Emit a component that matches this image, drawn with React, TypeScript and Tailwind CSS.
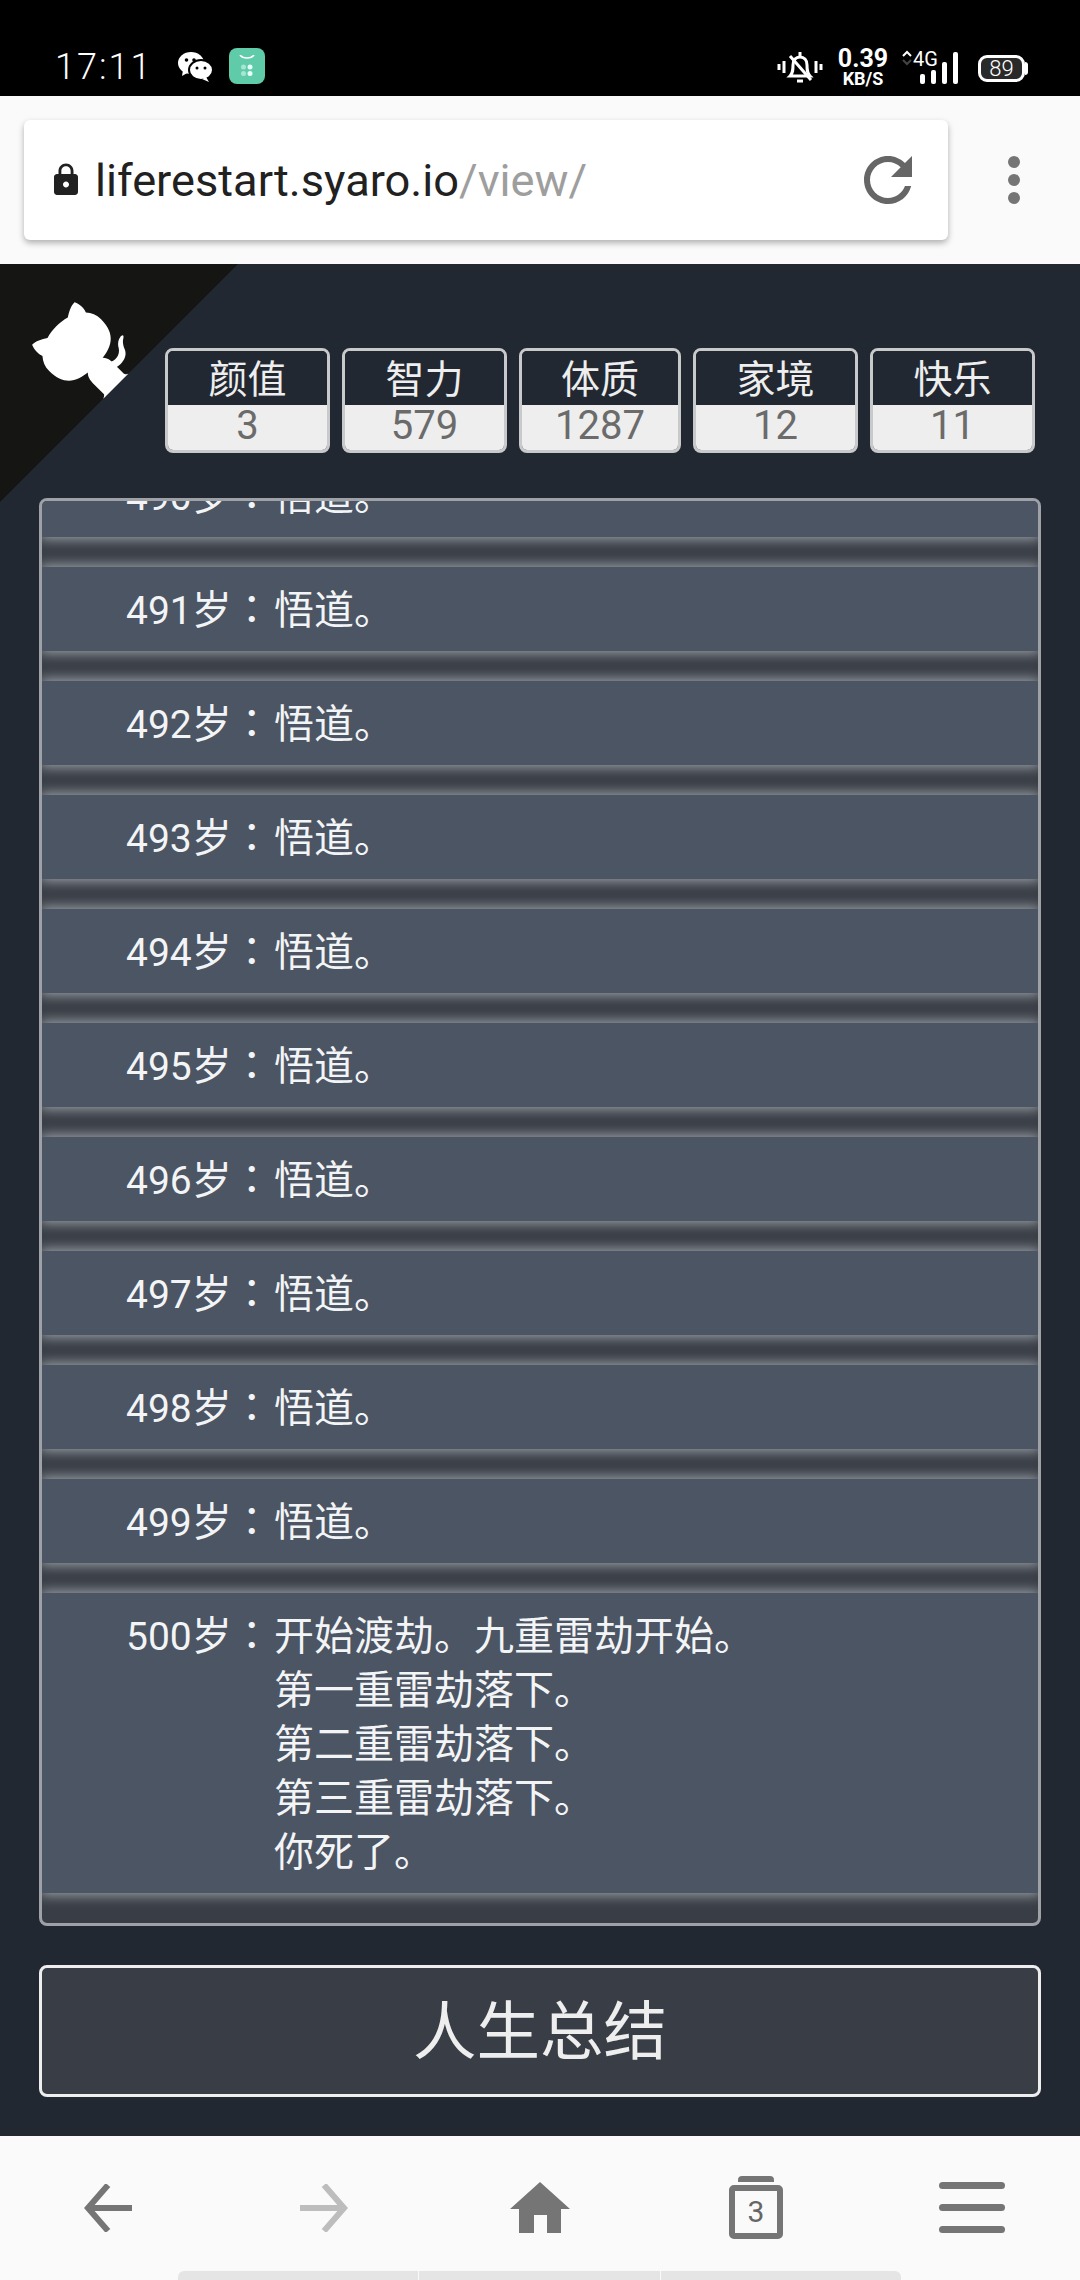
import React from 'react';

const stats = [
  { label: '颜值', value: 3, width: 'w-[165px]' },
  { label: '智力', value: 579, width: 'w-[165px]' },
  { label: '体质', value: 1287, width: 'w-[162px]' },
  { label: '家境', value: 12, width: 'w-[165px]' },
  { label: '快乐', value: 11, width: 'w-[165px]' },
];

const ages = [490, 491, 492, 493, 494, 495, 496, 497, 498, 499];
const lastLines = ['开始渡劫。九重雷劫开始。', '第一重雷劫落下。', '第二重雷劫落下。', '第三重雷劫落下。', '你死了。'];

const LifeItem = ({ age, lines }: { age: number; lines: string[] }) => (
  <li className="flex shrink-0 bg-[#4b5563] pb-[13px] pl-[84px] pt-[17px] text-[40px] leading-[54px] text-[#f3f4f6] shadow-[0_0_12px_2px_#a0a4ab]">
    <span className="w-[148px] shrink-0 whitespace-nowrap">
      <span className="text-[39px] leading-none">{age}</span>岁<span className="font-['Noto_Sans_CJK_TC'] leading-none">：</span>
    </span>
    <div>
      {lines.map((line) => (
        <div key={line}>{line}</div>
      ))}
    </div>
  </li>
);

const StatusBar = () => (
  <div className="flex h-24 shrink-0 items-end bg-black pb-[9px] pl-[55px] pr-[52px] text-white">
    <span className="w-[123px] text-[36px] font-light leading-[40px] tracking-[2px]">17:11</span>
    <svg width="34" height="30" viewBox="0 0 34 30" className="mb-[5px]">
      <ellipse cx="13" cy="11" rx="13" ry="11" fill="#fff" />
      <path d="M5 18l-1 6 7-4z" fill="#fff" />
      <circle cx="8.500" cy="8" r="1.800" fill="#000" />
      <circle cx="16" cy="8" r="1.800" fill="#000" />
      <ellipse cx="23" cy="18" rx="12" ry="10" fill="#fff" stroke="#000" strokeWidth="2" />
      <path d="M28 25l3 5-7-3z" fill="#fff" />
      <circle cx="19" cy="16" r="1.500" fill="#000" />
      <circle cx="27" cy="16" r="1.500" fill="#000" />
    </svg>
    <div className="mb-[3px] ml-[17px] flex h-9 w-9 flex-col items-center rounded-lg bg-[#5fcba8] pt-[7px]">
      <svg width="20" height="22" viewBox="0 0 20 22">
        <path d="M3 0c3 4 11 4 14 0" fill="none" stroke="#fff" strokeWidth="1.600" />
        <circle cx="6.500" cy="12" r="2.500" fill="#a8e6d2" />
        <circle cx="13" cy="12" r="2.500" fill="#e8fff8" />
        <circle cx="6.500" cy="18.500" r="2.500" fill="#a8e6d2" />
        <circle cx="13" cy="18.500" r="2.500" fill="#e8fff8" />
      </svg>
    </div>
    <div className="flex-1" />
    <svg width="46" height="34" viewBox="0 0 46 34" fill="none" stroke="#fff" strokeWidth="3" className="mb-[3px]">
      <path d="M2 14v6M7 11v12M39 11v12M44 14v6" />
      <path d="M13 26c3-3 3-6 3-11 0-5 3-8 7-8s7 3 7 8c0 5 0 8 3 11z" />
      <path d="M23 2v4M20 31h6M13 6l21 24" />
    </svg>
    <div className="ml-[15px] flex w-[50px] flex-col items-center font-bold text-white">
      <span className="text-[25px] leading-[23px]">0.39</span>
      <span className="text-[18px] leading-[17px]">KB/S</span>
    </div>
    <div className="relative mb-[3px] ml-[14px] h-[34px] w-[56px]">
      <svg width="10" height="16" viewBox="0 0 10 16" className="absolute left-0 top-0">
        <path d="M1 6l4-4 4 4" fill="none" stroke="#fff" strokeWidth="2" />
        <path d="M1 10l4 4 4-4" fill="none" stroke="#444" strokeWidth="2" />
      </svg>
      <span className="absolute left-[11px] top-[-2px] text-[20px] leading-[22px]">4G</span>
      <svg width="40" height="32" viewBox="0 0 40 32" className="absolute bottom-0 right-0">
        <rect x="2" y="22" width="5" height="10" rx="2" fill="#fff" />
        <rect x="13" y="18" width="5" height="14" rx="2" fill="#fff" />
        <rect x="24" y="10" width="5" height="22" rx="2" fill="#fff" />
        <rect x="35" y="0" width="5" height="32" rx="2" fill="#fff" />
      </svg>
    </div>
    <div className="mb-[5px] ml-[20px] flex items-center">
      <div className="flex h-[27px] w-[47px] items-center justify-center rounded-[9px] border-[3px] border-white bg-[#2a2a2a] text-[22px] font-light leading-none">
        89
      </div>
      <div className="h-[13px] w-[3px] rounded-r-sm bg-white" />
    </div>
  </div>
);

const BrowserBar = () => (
  <div className="flex h-[168px] shrink-0 items-center bg-[#fafafa] pl-6">
    <div className="flex h-[120px] w-[924px] items-center rounded-md bg-white pl-[24px] shadow-[0_3px_6px_rgba(0,0,0,0.3)]">
      <svg width="36" height="36" viewBox="0 0 24 24" fill="#212121">
        <path d="M18 8h-1V6c0-2.760-2.240-5-5-5S7 3.240 7 6v2H6c-1.100 0-2 .9-2 2v10c0 1.100.9 2 2 2h12c1.100 0 2-.9 2-2V10c0-1.100-.9-2-2-2zm-6 9c-1.100 0-2-.9-2-2s.9-2 2-2 2 .9 2 2-.9 2-2 2zm3.100-9H8.900V6c0-1.710 1.390-3.100 3.100-3.100 1.710 0 3.100 1.390 3.100 3.100v2z" />
      </svg>
      <div className="ml-[11px] mt-[2px] flex-1 text-[45.200px] leading-none text-[#212121]">
        liferestart.syaro.io<span className="text-[#9e9e9e]">/view/</span>
      </div>
      <svg width="72" height="72" viewBox="0 0 24 24" fill="#666" className="mr-[24px]">
        <path d="M17.650 6.350C16.200 4.900 14.210 4 12 4c-4.420 0-7.990 3.580-7.990 8s3.570 8 7.990 8c3.730 0 6.840-2.550 7.730-6h-2.080c-.82 2.330-3.040 4-5.650 4-3.310 0-6-2.690-6-6s2.690-6 6-6c1.660 0 3.140.69 4.220 1.780L13 11h7V4l-2.350 2.350z" />
      </svg>
    </div>
    <div className="ml-[60px] flex flex-col gap-[6px]">
      <div className="h-3 w-3 rounded-full bg-[#757575]" />
      <div className="h-3 w-3 rounded-full bg-[#757575]" />
      <div className="h-3 w-3 rounded-full bg-[#757575]" />
    </div>
  </div>
);

const GithubCorner = () => (
  <svg width="238" height="238" viewBox="0 0 250 250" className="absolute left-0 top-0 -scale-x-100 fill-[#151513] text-white">
    <path d="M0,0 L115,115 L130,115 L142,142 L250,250 L250,0 Z" />
    <path
      d="M128.3,109.0 C113.8,99.7 119.0,89.6 119.0,89.6 C122.0,82.7 120.5,78.6 120.5,78.6 C119.2,72.0 123.4,76.3 123.4,76.3 C127.3,80.9 125.5,87.3 125.5,87.3 C122.9,97.6 130.6,101.9 134.4,103.2"
      fill="currentColor"
    />
    <path
      d="M115.0,115.0 C114.9,115.1 118.7,116.5 119.8,115.4 L133.7,101.6 C136.9,99.2 139.9,98.4 142.2,98.6 C133.8,88.0 127.5,74.4 143.8,58.0 C148.5,53.4 154.0,51.2 159.7,51.0 C160.3,49.4 163.2,43.6 171.4,40.1 C171.4,40.1 176.1,42.5 178.8,56.2 C183.1,58.6 187.2,61.8 190.9,65.4 C194.5,69.0 197.7,73.2 200.1,77.6 C213.8,80.2 216.3,84.9 216.3,84.9 C212.7,93.1 206.9,96.0 205.4,96.6 C205.1,102.4 203.0,107.8 198.3,112.5 C181.9,128.9 168.3,122.5 157.7,114.1 C157.9,116.9 156.7,120.9 152.7,124.9 L141.0,136.5 C139.8,137.7 141.6,141.9 141.8,141.8 Z"
      fill="currentColor"
    />
  </svg>
);

const BottomNav = () => (
  <div className="flex h-[144px] shrink-0 flex-col bg-[#fafafa]">
    <div className="grid flex-1 grid-cols-5 items-center pt-[8px]">
      <div className="flex justify-center">
        <svg width="48" height="48" viewBox="0 0 48 48" fill="none" stroke="#757575" strokeWidth="6">
          <path d="M24 1L4 24l20 23" />
          <path d="M4 24h44" />
        </svg>
      </div>
      <div className="flex justify-center">
        <svg width="48" height="48" viewBox="0 0 48 48" fill="none" stroke="#bdbdbd" strokeWidth="6">
          <path d="M24 1l20 23-20 23" />
          <path d="M44 24H0" />
        </svg>
      </div>
      <div className="flex justify-center">
        <svg width="60" height="51" viewBox="0 0 60 51" fill="#757575">
          <path d="M30 0L60 27H51V51H37V33H24V51H9V27H0Z" />
        </svg>
      </div>
      <div className="flex flex-col items-center">
        <div className="h-[6px] w-[36px] rounded-t-[4px] bg-[#757575]" />
        <div className="mt-[3px] flex h-[54px] w-[54px] items-center justify-center rounded-[5px] border-[6px] border-[#757575] text-[30px] leading-none text-[#666]">
          3
        </div>
      </div>
      <div className="flex flex-col items-center gap-[15px]">
        <div className="h-[7px] w-[66px] rounded-full bg-[#757575]" />
        <div className="h-[7px] w-[66px] rounded-full bg-[#757575]" />
        <div className="h-[7px] w-[66px] rounded-full bg-[#757575]" />
      </div>
    </div>
    <div className="ml-[178px] flex h-[9px] w-[723px] gap-[1px]">
      <div className="flex-1 rounded-tl-md bg-[#e5e5e5]" />
      <div className="flex-1 bg-[#e5e5e5]" />
      <div className="flex-1 rounded-tr-md bg-[#e5e5e5]" />
    </div>
  </div>
);

export default function App() {
  return (
    <div className="flex h-[2280px] w-[1080px] flex-col overflow-hidden font-['Roboto','Noto_Sans_CJK_SC',sans-serif]">
      <StatusBar />
      <BrowserBar />

      <div className="relative flex flex-1 flex-col bg-[#222831] px-[39px]">
        <GithubCorner />
        <div className="relative ml-[126px] mt-[84px] flex gap-[12px]">
          {stats.map((s) => (
            <div key={s.label} className={`${s.width} overflow-hidden rounded-lg border-[3px] border-[#c8c9cb] text-center`}>
              <div className="h-[54px] bg-[#222831] pt-[4px] text-[39px] leading-[50px] text-[#eeeeee]">{s.label}</div>
              <div className="h-[45px] bg-[#eeeeee] text-[40px] leading-[41px] text-[#6b6b6b]">{s.value}</div>
            </div>
          ))}
        </div>

        <ul className="relative mt-[45px] flex h-[1428px] flex-col justify-end gap-[30px] overflow-hidden rounded-lg border-[3px] border-[#9ea1a6] bg-[#393e46] pb-[30px]">
          {ages.map((age) => (
            <LifeItem key={age} age={age} lines={['悟道。']} />
          ))}
          <LifeItem age={500} lines={lastLines} />
        </ul>

        <button className="mt-[39px] h-[132px] rounded-lg border-[3px] border-[#eeeeee] bg-[#393e46] pt-[4px] text-[63.500px] text-[#eeeeee]">
          人生总结
        </button>
      </div>

      <BottomNav />
    </div>
  );
}
